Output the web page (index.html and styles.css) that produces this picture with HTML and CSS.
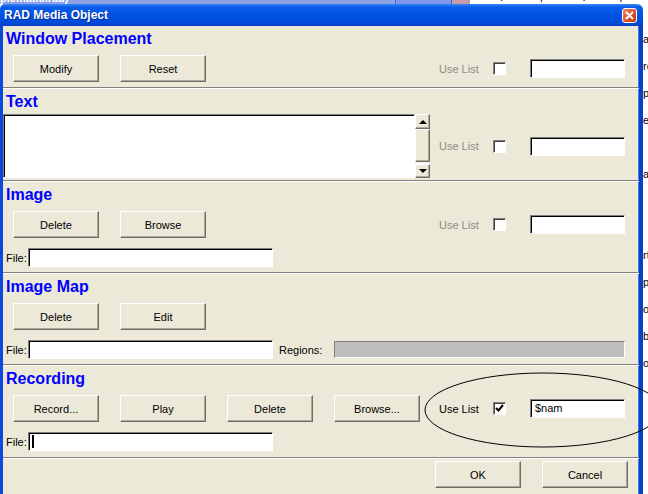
FILE: index.html
```html
<!doctype html>
<html lang="en">

<head>

<meta charset="utf-8">
<title>RAD Media Object</title>

<link rel="stylesheet" href="styles.css">

</head>
<body>

<!-- window behind, only its bottom edge shows -->
<div class="strip">
  <span class="strip-title">plematic.rad)</span>
  <span class="strip-tool"></span>
  <span class="strip-close"></span>
  <span class="strip-page">.&nbsp;&nbsp;&nbsp;&nbsp;&nbsp;&nbsp;&nbsp;&nbsp;&nbsp;&nbsp;&nbsp;&nbsp;,&nbsp;&nbsp;&nbsp;&nbsp;&nbsp;&nbsp;&nbsp;&nbsp;&nbsp;&nbsp;&nbsp;&nbsp;&nbsp;.&nbsp;&nbsp;&nbsp;&nbsp;&nbsp;&nbsp;&nbsp;&nbsp;&nbsp;&nbsp;&nbsp;,</span>
</div>

<div class="screen">
  <div class="window">
    <div class="titlebar">
      <span class="caption">RAD Media Object</span>
      <span class="close">
        <svg width="9" height="9" viewBox="0 0 9 9"><path d="M1 1 L8 8 M8 1 L1 8" stroke="#fff" stroke-width="1.8" fill="none"/></svg>
      </span>
    </div>

    <div class="frame">

      <!-- Window Placement -->
      <div class="sec sec-place">
        <h2>Window Placement</h2>
        <div class="row">
          <div class="btns">
            <div class="btn">Modify</div>
            <div class="btn">Reset</div>
          </div>
          <div class="uselist off">
            <span class="ul-label">Use List</span>
            <span class="check"></span>
            <span class="field"></span>
          </div>
        </div>
      </div>

      <!-- Text -->
      <div class="sec sec-text">
        <h2>Text</h2>
        <div class="row row-memo">
          <div class="memo">
            <div class="memo-box"></div>
            <div class="scroll">
              <div class="sb-btn sb-up"><span class="tri-up"></span></div>
              <div class="sb-thumb"></div>
              <div class="sb-track"></div>
              <div class="sb-btn sb-down"><span class="tri-down"></span></div>
            </div>
          </div>
          <div class="uselist off">
            <span class="ul-label">Use List</span>
            <span class="check"></span>
            <span class="field"></span>
          </div>
        </div>
      </div>

      <!-- Image -->
      <div class="sec">
        <h2>Image</h2>
        <div class="row">
          <div class="btns">
            <div class="btn">Delete</div>
            <div class="btn">Browse</div>
          </div>
          <div class="uselist off">
            <span class="ul-label">Use List</span>
            <span class="check"></span>
            <span class="field"></span>
          </div>
        </div>
        <div class="filerow">
          <span class="file-label">File:</span>
          <span class="field file-field"></span>
        </div>
      </div>

      <!-- Image Map -->
      <div class="sec">
        <h2>Image Map</h2>
        <div class="row">
          <div class="btns">
            <div class="btn">Delete</div>
            <div class="btn">Edit</div>
          </div>
        </div>
        <div class="filerow">
          <span class="file-label">File:</span>
          <span class="field file-field"></span>
          <span class="regions-label">Regions:</span>
          <span class="regions"></span>
        </div>
      </div>

      <!-- Recording -->
      <div class="sec sec-rec">
        <h2>Recording</h2>
        <div class="row">
          <div class="btns">
            <div class="btn">Record...</div>
            <div class="btn">Play</div>
            <div class="btn">Delete</div>
            <div class="btn">Browse...</div>
          </div>
          <div class="uselist">
            <span class="ul-label">Use List</span>
            <span class="check">
              <svg width="11" height="11" viewBox="0 0 11 11"><path d="M2 5 L4.5 7.5 L9 2" stroke="#000" stroke-width="2" fill="none"/></svg>
            </span>
            <span class="field">$nam</span>
          </div>
        </div>
        <div class="filerow">
          <span class="file-label">File:</span>
          <span class="field file-field"><span class="caret"></span></span>
        </div>
      </div>

      <!-- OK / Cancel -->
      <div class="sec foot">
        <div class="btn">OK</div>
        <div class="btn">Cancel</div>
      </div>

    </div>
  </div>

  <!-- sliver of the document behind the dialog -->
  <div class="desk">
    <span>a</span>
    <span>ro</span>
    <span>pl</span>
    <span>et</span>
    <span>&nbsp;</span>
    <span>az</span>
    <span>&nbsp;</span>
    <span>&nbsp;</span>
    <span>rt</span>
    <span>po</span>
    <span>op</span>
    <span>b</span>
    <span>o</span>
  </div>
</div>

<!-- hand drawn mark round the Use List of Recording -->
<svg class="mark" width="648" height="494" viewBox="0 0 648 494">
  <ellipse cx="543" cy="410" rx="118" ry="37" fill="none" stroke="#000" stroke-width="1"/>
</svg>

</body>

</html>
```

FILE: styles.css
```css
body {
  margin: 0;
  width: 648px;
  height: 494px;
  overflow: hidden;
  position: relative;
  background-color: #ffffff;
  font-family: "Liberation Sans", Arial, sans-serif;
  font-size: 11px;
  color: #000000;
}

/* strip of the window behind */
.strip {
  display: flex;
  height: 4px;
  overflow: hidden;
}
.strip-title {
  display: block;
  width: 395px;
  height: 12px;
  margin-top: -8px;
  line-height: 12px;
  background-color: #8da3e4;
  color: #ffffff;
  font-weight: bold;
}
.strip-tool {
  width: 55px;
  background-color: #7e97ea;
  border-left: 1px solid #4a64c4;
  border-right: 1px solid #4a64c4;
}
.strip-close {
  width: 18px;
  background-color: #c79aa6;
}
.strip-page {
  display: block;
  flex: 1;
  height: 12px;
  margin-top: -9px;
  line-height: 12px;
  padding-left: 30px;
  background-color: #ffffff;
  white-space: pre;
}

.screen {
  display: flex;
  height: 490px;
  overflow: hidden;
}

/* dialog */
.window {
  width: 643px;
  flex: none;
  display: flex;
  flex-direction: column;
}
.titlebar {
  flex: none;
  height: 22px;
  box-sizing: border-box;
  display: flex;
  align-items: center;
  justify-content: space-between;
  padding: 0 6px 0 4px;
  border-radius: 5px 6px 0 0;
  background: linear-gradient(#3b86f7, #0a5de9 3px, #0055e4 45%, #004cdb 80%, #0a40c8);
}
.caption {
  color: #ffffff;
  font-weight: bold;
  font-size: 12px;
  text-shadow: 1px 1px #0b2a99;
}
.close {
  width: 15px;
  height: 15px;
  box-sizing: border-box;
  display: flex;
  align-items: center;
  justify-content: center;
  border: 1px solid #ffffff;
  border-radius: 3px;
  background: linear-gradient(135deg, #ef8c6c, #d9502c 55%, #bf3515);
}
.frame {
  flex: 1;
  border-left: 3px solid #0a49dc;
  border-right: 4px solid #0a40c8;
  box-shadow: inset -1px 0 #3d7bec;
  background-color: #ece9d8;
}

/* sections */
.sec {
  box-sizing: border-box;
  border-top: 1px solid #808080;
  box-shadow: inset 0 1px #ffffff;
  padding-top: 3px;
  height: 92px;
}
.sec-place {
  height: 61px;
  border-top: none;
  box-shadow: none;
  padding-top: 2px;
}
.sec-text,
.sec-rec {
  height: 93px;
}
.sec h2 {
  margin: 2px 0 0 3px;
  font-size: 16px;
  line-height: 18px;
  font-weight: bold;
  color: #0000ff;
}

.row {
  display: flex;
  align-items: center;
  margin-top: 7px;
  padding-right: 14px;
}
.row-memo {
  margin-top: 3px;
}
.btns {
  display: flex;
  gap: 21px;
  padding-left: 10px;
}
.btn {
  width: 86px;
  height: 27px;
  box-sizing: border-box;
  display: flex;
  align-items: center;
  justify-content: center;
  border: 1px solid;
  border-color: #ffffff #716f64 #716f64 #ffffff;
  box-shadow: inset -1px -1px #aca899;
  background-color: #ece9d8;
}

/* Use List group */
.uselist {
  margin-left: auto;
  display: flex;
  align-items: center;
}
.ul-label {
  width: 54px;
}
.off .ul-label {
  color: #8e8c84;
}
.check {
  width: 13px;
  height: 13px;
  box-sizing: border-box;
  display: flex;
  align-items: center;
  justify-content: center;
  margin-right: 24px;
  border: 1px solid;
  border-color: #808080 #ffffff #ffffff #808080;
  box-shadow: inset 1px 1px #404040;
  background-color: #ffffff;
}
.field {
  display: block;
  width: 95px;
  height: 19px;
  box-sizing: border-box;
  padding: 0 0 0 4px;
  line-height: 17px;
  border: 1px solid;
  border-color: #808080 #ffffff #ffffff #808080;
  box-shadow: inset 1px 1px #000000;
  background-color: #ffffff;
}

/* text box with scroll bar */
.memo {
  display: flex;
}
.memo-box {
  width: 412px;
  height: 64px;
  box-sizing: border-box;
  border: 1px solid;
  border-color: #808080 #ffffff #ffffff #808080;
  box-shadow: inset 1px 1px #000000;
  background-color: #ffffff;
}
.scroll {
  width: 15px;
  height: 64px;
  display: flex;
  flex-direction: column;
}
.sb-btn,
.sb-thumb {
  box-sizing: border-box;
  border: 1px solid;
  border-color: #ffffff #716f64 #716f64 #ffffff;
  box-shadow: inset -1px -1px #aca899;
  background-color: #ece9d8;
  display: flex;
  align-items: center;
  justify-content: center;
}
.sb-up {
  height: 15px;
}
.sb-thumb {
  height: 33px;
}
.sb-track {
  height: 2px;
  background-color: #f6f5ef;
}
.sb-down {
  height: 14px;
}
.tri-up {
  border-left: 4px solid transparent;
  border-right: 4px solid transparent;
  border-bottom: 4px solid #000000;
}
.tri-down {
  border-left: 4px solid transparent;
  border-right: 4px solid transparent;
  border-top: 4px solid #000000;
}

/* File rows */
.filerow {
  display: flex;
  align-items: center;
  margin-top: 10px;
  padding-left: 3px;
}
.file-label {
  width: 22px;
}
.file-field {
  width: 245px;
}
.caret {
  display: inline-block;
  width: 2px;
  height: 13px;
  margin-top: 2px;
  margin-left: -1px;
  background-color: #000000;
  vertical-align: top;
}
.regions-label {
  width: 55px;
  margin-left: 6px;
}
.regions {
  width: 291px;
  height: 17px;
  box-sizing: border-box;
  border: 1px solid;
  border-color: #808080 #ffffff #ffffff #808080;
  background-color: #bdbdbd;
}

/* OK / Cancel */
.foot {
  height: 37px;
  display: flex;
  justify-content: flex-end;
  gap: 21px;
  padding-right: 11px;
}

/* document behind */
.desk {
  flex: 1;
  overflow: hidden;
  display: flex;
  flex-direction: column;
  padding-top: 22px;
  background-color: #ffffff;
  line-height: 27px;
  white-space: nowrap;
}

.mark {
  position: absolute;
  left: 0;
  top: 0;
  pointer-events: none;
}
```
